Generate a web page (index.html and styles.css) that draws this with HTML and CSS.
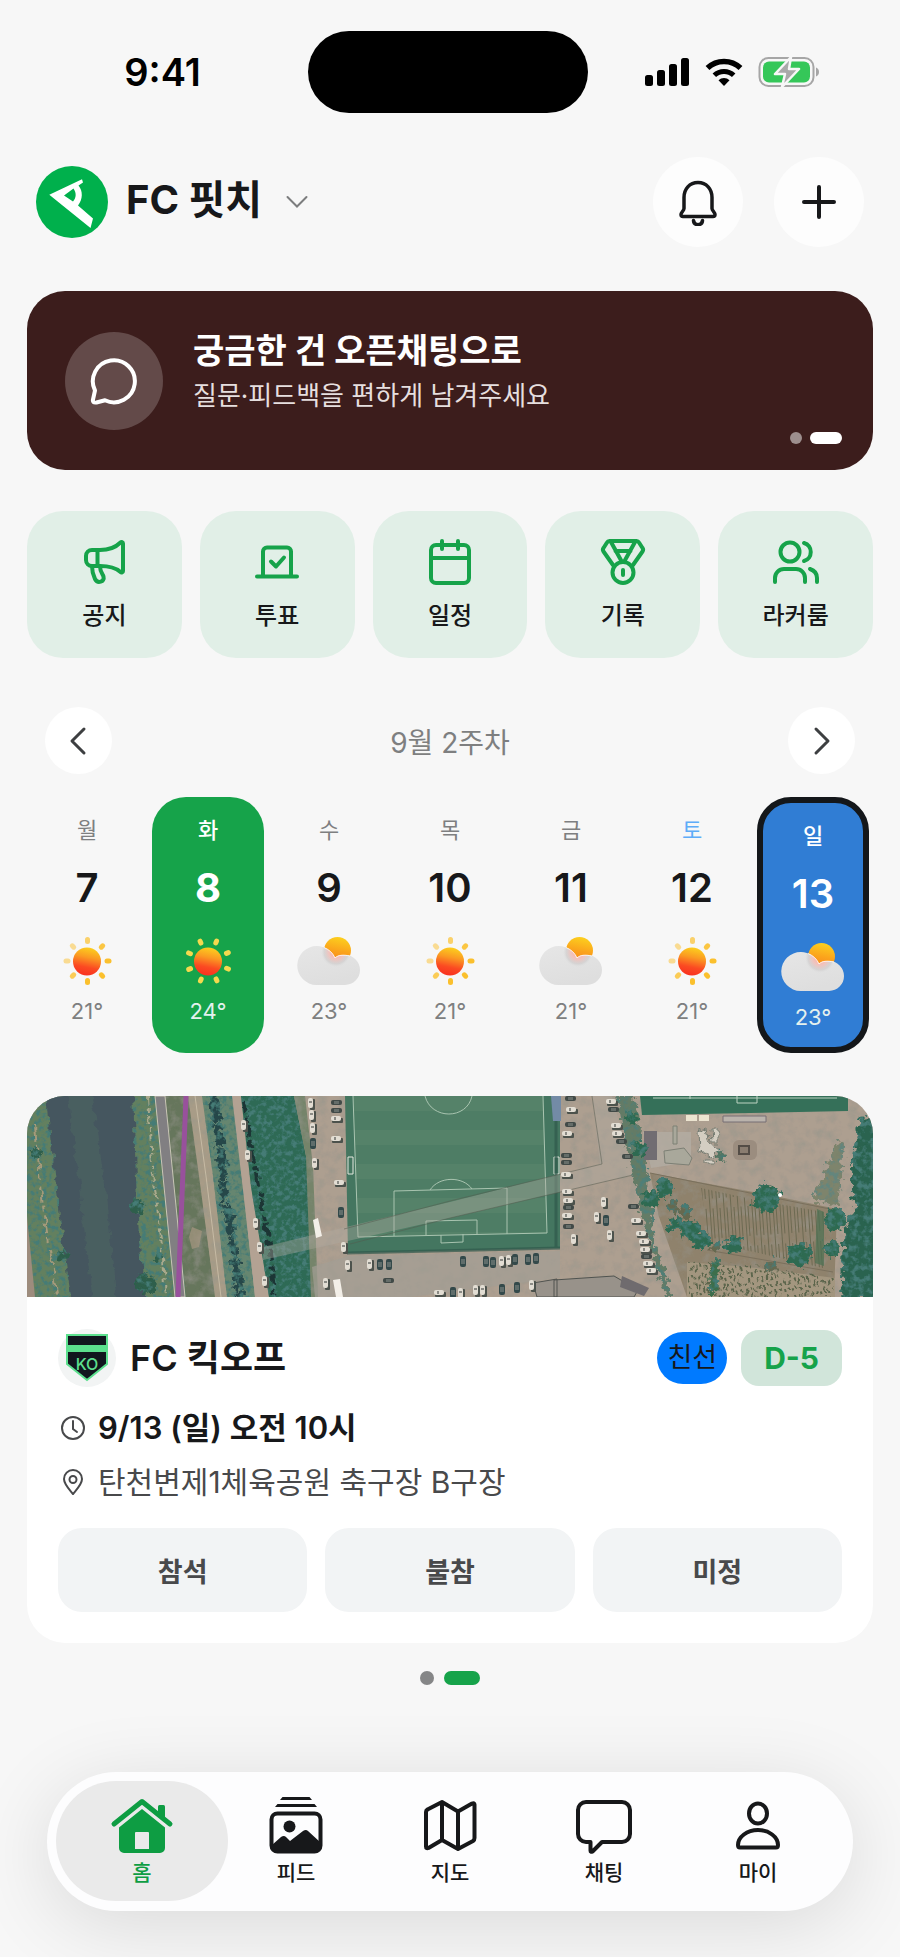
FILE: index.html
```html
<!DOCTYPE html>
<html lang="ko">
<head>
    <meta charset="UTF-8">
    <meta name="viewport" content="width=device-width, initial-scale=1.0">
    <title>FC 핏치</title>
    <link rel="stylesheet" href="styles.css">
</head>
<body>
    <!-- Shared symbols -->
    <svg class="symbols" width="0" height="0" aria-hidden="true">
        <defs>
            <linearGradient id="sunFill" x1="0.6" y1="0" x2="0.4" y2="1">
                <stop offset="0" stop-color="#fcd01e"/>
                <stop offset="0.35" stop-color="#fb9a22"/>
                <stop offset="0.7" stop-color="#fb4a22"/>
                <stop offset="1" stop-color="#f9301f"/>
            </linearGradient>
            <linearGradient id="smallSunFill" x1="0.6" y1="0" x2="0.4" y2="1">
                <stop offset="0" stop-color="#fcd01e"/>
                <stop offset="0.5" stop-color="#fba41c"/>
                <stop offset="1" stop-color="#f8801f"/>
            </linearGradient>
            <linearGradient id="cloudFill" x1="0" y1="0" x2="0.4" y2="1">
                <stop offset="0" stop-color="#e6e6e6"/>
                <stop offset="1" stop-color="#dedede"/>
            </linearGradient>
            <radialGradient id="cloudGlow">
                <stop offset="0" stop-color="#ffa79b"/>
                <stop offset="0.5" stop-color="#f3bdb6" stop-opacity="0.8"/>
                <stop offset="0.8" stop-color="#c9c6c6" stop-opacity="0.5"/>
                <stop offset="1" stop-color="#dcdcdc" stop-opacity="0"/>
            </radialGradient>
            <clipPath id="cloudClip">
                <path d="M20 9C28 9 35 14 38 21C41 18 44 18 48 18A15 15 0 0 1 48 48H19.500A19.500 19.500 0 0 1 20 9Z"/>
            </clipPath>
        </defs>
        <symbol id="sun" viewBox="0 0 52 52">
            <g fill="#fbc02d">
                <rect x="24" y="2" width="5" height="7" rx="2.500" opacity="0.7"/>
                <rect x="24" y="2" width="5" height="7" rx="2.500" opacity="0.9" transform="rotate(45 26.500 26)"/>
                <rect x="24" y="2" width="5" height="7" rx="2.500" transform="rotate(90 26.500 26)"/>
                <rect x="24" y="2" width="5" height="7" rx="2.500" transform="rotate(135 26.500 26)"/>
                <rect x="24" y="2" width="5" height="7" rx="2.500" transform="rotate(180 26.500 26)"/>
                <rect x="24" y="2" width="5" height="7" rx="2.500" opacity="0.8" transform="rotate(225 26.500 26)"/>
                <rect x="24" y="2" width="5" height="7" rx="2.500" opacity="0.5" transform="rotate(270 26.500 26)"/>
                <rect x="24" y="2" width="5" height="7" rx="2.500" opacity="0.5" transform="rotate(315 26.500 26)"/>
            </g>
            <circle cx="26" cy="26.500" r="14" fill="url(#sunFill)"/>
        </symbol>
        <symbol id="sun-turned" viewBox="0 0 52 52">
            <g fill="#f5d94e" transform="rotate(22 26.500 26)">
                <rect x="24" y="2" width="5" height="7" rx="2.500"/>
                <rect x="24" y="2" width="5" height="7" rx="2.500" transform="rotate(45 26.500 26)"/>
                <rect x="24" y="2" width="5" height="7" rx="2.500" transform="rotate(90 26.500 26)"/>
                <rect x="24" y="2" width="5" height="7" rx="2.500" transform="rotate(135 26.500 26)"/>
                <rect x="24" y="2" width="5" height="7" rx="2.500" transform="rotate(180 26.500 26)"/>
                <rect x="24" y="2" width="5" height="7" rx="2.500" transform="rotate(225 26.500 26)"/>
                <rect x="24" y="2" width="5" height="7" rx="2.500" transform="rotate(270 26.500 26)"/>
                <rect x="24" y="2" width="5" height="7" rx="2.500" transform="rotate(315 26.500 26)"/>
            </g>
            <circle cx="26" cy="26.500" r="14" fill="url(#sunFill)"/>
        </symbol>
        <symbol id="cloudy" viewBox="0 -2 64 52">
            <circle cx="40.500" cy="13.500" r="13.500" fill="url(#smallSunFill)"/>
            <path d="M20 9C28 9 35 14 38 21C41 18 44 18 48 18A15 15 0 0 1 48 48H19.500A19.500 19.500 0 0 1 20 9Z" fill="url(#cloudFill)"/>
            <circle cx="39" cy="15" r="15" fill="url(#cloudGlow)" clip-path="url(#cloudClip)"/>
            <path d="M27 10.500C32 12.500 36 16 38 21C41 18 46 17.500 53 19" fill="none" stroke="#fff" stroke-width="1" opacity="0.8"/>
        </symbol>
    </svg>

    <div class="app">
        <div class="status-bar">
            <div class="status-side"><span class="clock">9:41</span></div>
            <div class="island"></div>
            <div class="status-side status-icons">
                <svg width="45" height="30" viewBox="0 0 45 30" aria-hidden="true">
                    <rect x="0" y="18" width="8" height="11" rx="2.500"/>
                    <rect x="12" y="13" width="8" height="16" rx="2.500"/>
                    <rect x="24" y="7" width="8" height="22" rx="2.500"/>
                    <rect x="36" y="1" width="8" height="28" rx="2.500"/>
                </svg>
                <svg width="38" height="30" viewBox="0 0 38 30" aria-hidden="true">
                    <path d="M19 29L13.500 23.300a8 8 0 0 1 11 0z"/>
                    <path d="M9.300 18.300a14 14 0 0 1 19.400 0" fill="none" stroke="#000" stroke-width="5"/>
                    <path d="M2.500 11a24 24 0 0 1 33 0" fill="none" stroke="#000" stroke-width="5.500"/>
                </svg>
                <svg width="62" height="32" viewBox="0 0 62 32" aria-hidden="true">
                    <rect x="1.500" y="2" width="54" height="28" rx="9" fill="none" stroke="#a6a6a6" stroke-width="2"/>
                    <rect x="5" y="5.500" width="47" height="21" rx="6" fill="#35c759"/>
                    <path d="M58 11.500c4 1.500 4 7.500 0 9z" fill="#a6a6a6"/>
                    <path d="M33 1L17 18h10l-3 13 17-18H31z" fill="#a9a9a9" stroke="#f7f7f7" stroke-width="2.500" stroke-linejoin="round"/>
                </svg>
            </div>
        </div>

        <header class="header">
            <button class="team-switch" type="button">
                <svg class="team-logo" viewBox="0 0 72 72" aria-hidden="true">
                    <circle cx="36" cy="36" r="36" fill="#00b04c"/>
                    <path fill="#fff" fill-rule="evenodd" d="M13.300 28.700L46 13.300L47 16.500L42.500 19.500C47 25 47 33 42 39.500L57 52.500L54.500 62Z M28 29.500L37 35.500C40.500 31.500 40.500 27 37.500 22.500Z"/>
                </svg>
                <span class="team-name">FC 핏치</span>
                <svg width="22" height="14" viewBox="0 0 22 14" fill="none" stroke="#7c7d7e" stroke-width="2" stroke-linecap="round" aria-hidden="true">
                    <path d="M1.500 2l9.500 9.500L20.500 2"/>
                </svg>
            </button>
            <div class="header-actions">
                <button class="round-button" type="button" aria-label="알림">
                    <svg width="48" height="48" viewBox="0 0 48 48" fill="none" stroke="#17181a" stroke-width="3.500" stroke-linejoin="round" stroke-linecap="round" aria-hidden="true">
                        <path d="M24 4.500c-8.500 0-14 6.500-14 15v11c0 2-3 4-3 6 0 1.500.5 2 2 2h30c1.500 0 2-.5 2-2 0-2-3-4-3-6V19.500c0-8.500-5.500-15-14-15z"/>
                        <path d="M19.500 42.500c.5 5.500 8.500 5.500 9 0"/>
                    </svg>
                </button>
                <button class="round-button" type="button" aria-label="추가">
                    <svg width="48" height="48" viewBox="0 0 48 48" fill="none" stroke="#17181a" stroke-width="4" stroke-linecap="round" aria-hidden="true">
                        <path d="M24 9v30M9 24h30"/>
                    </svg>
                </button>
            </div>
        </header>

        <main>
            <a class="banner" href="#openchat">
                <span class="banner-icon">
                    <svg width="52" height="52" viewBox="0 0 52 52" fill="none" stroke="#fff" stroke-width="4" stroke-linejoin="round" aria-hidden="true">
                        <path d="M7 35.500a21 21 0 1 1 10 9.800l-8.500 2.200c-3 .5-4-.8-3.500-3z"/>
                    </svg>
                </span>
                <span class="banner-text">
                    <strong>궁금한 건 오픈채팅으로</strong>
                    <span>질문·피드백을 편하게 남겨주세요</span>
                </span>
                <span class="banner-dots"><i></i><i class="on"></i></span>
            </a>

            <nav class="quick-menu" aria-label="바로가기">
                <a href="#notice">
                    <svg viewBox="0 0 48 48" aria-hidden="true">
                        <path d="M12 12h8c9 0 16-3 20.500-7.500 1-1 2.500-.5 2.500 1V33c0 1.500-1.500 2-2.500 1C36 30 29 28 20 28h-8a6 6 0 0 1-6-6v-4a6 6 0 0 1 6-6z"/>
                        <path d="M17.500 12v16M12 28c0 5 1 9 3 13 2.500 5 10 3 8.500-2.500-.5-2-3.500-5-3.500-10"/>
                    </svg>
                    공지
                </a>
                <a href="#vote">
                    <svg viewBox="0 0 48 48" aria-hidden="true">
                        <path d="M4 38.500h40M10 38V13.500a4 4 0 0 1 4-4h20a4 4 0 0 1 4 4V38M18 23.500l5 5 8-9"/>
                    </svg>
                    투표
                </a>
                <a href="#schedule">
                    <svg viewBox="0 0 48 48" aria-hidden="true">
                        <rect x="5" y="7" width="38" height="38" rx="5"/>
                        <path d="M5 20h38M16 3v8M32 3v8"/>
                    </svg>
                    일정
                </a>
                <a href="#record">
                    <svg viewBox="0 0 48 48" aria-hidden="true">
                        <path d="M14 27L4.500 13.500a3 3 0 0 1 0-3.500L8 4.500A3 3 0 0 1 10.500 3h27A3 3 0 0 1 40 4.500l3.500 5.500a3 3 0 0 1 0 3.500L34 27"/>
                        <path d="M12 4l11 20M36 4L25 24M16.500 13h15"/>
                        <circle cx="24" cy="34.500" r="10.500"/>
                        <path d="M24 32v5"/>
                    </svg>
                    기록
                </a>
                <a href="#locker">
                    <svg viewBox="0 0 48 48" aria-hidden="true">
                        <circle cx="18" cy="14" r="9.500"/>
                        <path d="M3 44v-4c0-5 4-9 9-9h12c5 0 9 4 9 9v4M32 5c9 2.500 9 15.500 0 18M38 31c4.500 1.500 7 4.500 7 9v4"/>
                    </svg>
                    라커룸
                </a>
            </nav>

            <section class="week" aria-label="주간 일정">
                <div class="week-nav">
                    <button type="button" aria-label="이전 주">
                        <svg width="32" height="32" viewBox="0 0 32 32" aria-hidden="true"><path d="M21 4L9 16l12 12"/></svg>
                    </button>
                    <h2>9월 2주차</h2>
                    <button type="button" aria-label="다음 주">
                        <svg width="32" height="32" viewBox="0 0 32 32" aria-hidden="true"><path d="M11 4l12 12-12 12"/></svg>
                    </button>
                </div>
                <div class="days">
                    <button class="day" type="button">
                        <span class="day-name">월</span>
                        <span class="day-number">7</span>
                        <svg class="weather" aria-hidden="true"><use href="#sun"/></svg>
                        <span class="temp">21°</span>
                    </button>
                    <button class="day today" type="button">
                        <span class="day-name">화</span>
                        <span class="day-number">8</span>
                        <svg class="weather" aria-hidden="true"><use href="#sun-turned"/></svg>
                        <span class="temp">24°</span>
                    </button>
                    <button class="day" type="button">
                        <span class="day-name">수</span>
                        <span class="day-number">9</span>
                        <svg class="weather" aria-hidden="true"><use href="#cloudy"/></svg>
                        <span class="temp">23°</span>
                    </button>
                    <button class="day" type="button">
                        <span class="day-name">목</span>
                        <span class="day-number">10</span>
                        <svg class="weather" aria-hidden="true"><use href="#sun"/></svg>
                        <span class="temp">21°</span>
                    </button>
                    <button class="day" type="button">
                        <span class="day-name">금</span>
                        <span class="day-number">11</span>
                        <svg class="weather" aria-hidden="true"><use href="#cloudy"/></svg>
                        <span class="temp">21°</span>
                    </button>
                    <button class="day saturday" type="button">
                        <span class="day-name">토</span>
                        <span class="day-number">12</span>
                        <svg class="weather" aria-hidden="true"><use href="#sun"/></svg>
                        <span class="temp">21°</span>
                    </button>
                    <button class="day selected" type="button">
                        <span class="day-name">일</span>
                        <span class="day-number">13</span>
                        <svg class="weather" aria-hidden="true"><use href="#cloudy"/></svg>
                        <span class="temp">23°</span>
                    </button>
                </div>
            </section>

            <article class="match-card">
                <svg class="map-photo" viewBox="0 0 846 201" preserveAspectRatio="xMidYMid slice" role="img" aria-label="축구장 위성 사진">
                    <defs>
                        <filter id="leaves" x="0" y="0" width="100%" height="100%">
                            <feTurbulence type="fractalNoise" baseFrequency="0.2" numOctaves="3" seed="4" result="n"/>
                            <feColorMatrix in="n" values="0 0 0 0 0.06  0 0 0 0 0.2  0 0 0 0 0.18  0 4 0 0 -1.800"/>
                            <feComposite in2="SourceAlpha" operator="in" result="shade"/>
                            <feMerge><feMergeNode in="SourceGraphic"/><feMergeNode in="shade"/></feMerge>
                        </filter>
                        <filter id="grit" x="0" y="0" width="100%" height="100%">
                            <feTurbulence type="fractalNoise" baseFrequency="0.09" numOctaves="4" seed="9" result="n"/>
                            <feColorMatrix in="n" values="0 0 0 0 0.3  0 0 0 0 0.3  0 0 0 0 0.26  0 1.400 0 0 -0.600"/>
                            <feComposite in2="SourceAlpha" operator="in" result="shade"/>
                            <feMerge><feMergeNode in="SourceGraphic"/><feMergeNode in="shade"/></feMerge>
                        </filter>
                        <filter id="rough" x="-10%" y="-10%" width="120%" height="120%">
                            <feTurbulence type="fractalNoise" baseFrequency="0.12" numOctaves="2" seed="2" result="n"/>
                            <feDisplacementMap in="SourceGraphic" in2="n" scale="9" xChannelSelector="R" yChannelSelector="G"/>
                        </filter>
                        <filter id="crown" x="-20%" y="-20%" width="140%" height="140%">
                            <feTurbulence type="fractalNoise" baseFrequency="0.16" numOctaves="3" seed="7" result="n"/>
                            <feDisplacementMap in="SourceGraphic" in2="n" scale="14" xChannelSelector="R" yChannelSelector="G" result="shape"/>
                            <feColorMatrix in="n" values="0 0 0 0 0.06  0 0 0 0 0.2  0 0 0 0 0.18  0 4 0 0 -1.800" result="dark"/>
                            <feComposite in="dark" in2="shape" operator="in" result="shade"/>
                            <feMerge><feMergeNode in="shape"/><feMergeNode in="shade"/></feMerge>
                        </filter>
                        <pattern id="mowing" width="20" height="34" patternUnits="userSpaceOnUse">
                            <rect width="20" height="34" fill="#4e7d65"/>
                            <rect width="20" height="15" fill="#558269"/>
                        </pattern>
                        <pattern id="rows" width="7" height="40" patternUnits="userSpaceOnUse" patternTransform="rotate(-4)">
                            <path d="M1.500 0v40M4.500 0v30" stroke="#6d6a52" stroke-width="1"/>
                        </pattern>
                        <pattern id="shrubs" width="9" height="8" patternUnits="userSpaceOnUse" patternTransform="rotate(-12)">
                            <path d="M2 1v4M6 3v4" stroke="#5c654c" stroke-width="2"/>
                        </pattern>
                        <g id="car"><rect x="1" y="2" width="11" height="5" rx="1" fill="#4c524c"/><rect width="10" height="5" rx="2" fill="#e2ddd3"/><rect x="3" y="1" width="2" height="3" fill="#8a8a84"/></g>
                        <g id="car-dark"><rect width="11" height="5" rx="2" fill="#414a47"/><rect x="3" y="1" width="5" height="3" fill="#656d69"/></g>
                        <g id="car-v"><rect x="2" y="1" width="5" height="11" rx="1" fill="#4c524c"/><rect width="5" height="10" rx="2" fill="#e2ddd3"/><rect x="1" y="3" width="3" height="2" fill="#8a8a84"/></g>
                        <g id="car-vd"><rect width="6" height="11" rx="2" fill="#33494a"/><rect x="1" y="3" width="4" height="5" fill="#5f6d6b"/></g>
                    </defs>

                    <!-- Ground -->
                    <rect width="846" height="201" fill="#ad9f90" filter="url(#grit)"/>

                    <!-- River and banks -->
                    <path d="M0 0H150L190 201H0z" fill="#64805f" filter="url(#leaves)"/>
                    <path d="M0 120L8 201H0z" fill="#9d8c7d"/>
                    <g filter="url(#rough)">
                        <path d="M8 30l8 80 16 101" fill="none" stroke="#a59a7a" stroke-width="2" stroke-dasharray="14 5 5 7"/>
                        <path d="M20 -6L23 40L29 84L35 140L45 208H121L112 144L109 84L106 -6z" fill="#44575f"/>
                        <path d="M40 -6L52 90L66 208H90L78 90L64 -6z" fill="#4b6163" opacity="0.7"/>
                        <path d="M121 0l4 70 10 80 4 51" fill="none" stroke="#a9a98c" stroke-width="2" stroke-dasharray="9 3 4 3"/>
                    </g>
                    <g fill="#2f5f4b" filter="url(#crown)">
                        <circle cx="35" cy="160" r="6"/><circle cx="111" cy="110" r="7"/><circle cx="118" cy="187" r="10"/><circle cx="9" cy="57" r="5"/><circle cx="130" cy="162" r="4"/>
                    </g>

                    <!-- Riverside roads -->
                    <path d="M138 0H163L188 201H159z" fill="#66765c" filter="url(#grit)"/>
                    <path d="M165 131l10 4-3 16-7 2-3-12z" fill="#a69781" opacity="0.7"/>
                    <path d="M128 0h10l10 100 10 101h-10z" fill="#817f82" stroke="#c9c5b5" stroke-width="1"/>
                    <path d="M161 0h14l10 70 15 131h-12L172 80z" fill="#a89c87" filter="url(#grit)"/>
                    <path d="M168 0l11 80 15 121" fill="none" stroke="#c6baa4" stroke-width="1"/>
                    <path d="M159 0l-4 100-4 101" fill="none" stroke="#98519c" stroke-width="5"/>

                    <!-- Tree strips -->
                    <path d="M175 0H206L216 90L228 201H200L186 80z" fill="#66866f" filter="url(#leaves)"/>
                    <path d="M186 -4l7 50 4 50 9 50 8 60" fill="none" stroke="#28474a" stroke-width="8" stroke-dasharray="30 2 22 2" filter="url(#crown)"/>
                    <path d="M205 0h9l8 80 20 121h-14l-10-90z" fill="#b3a293"/>
                    <path d="M214 0h53l14 70 3 60 4 71h-46l-18-110z" fill="#2d6a54" filter="url(#leaves)"/>
                    <path d="M267 0l12 60 5 141h7l-5-130-8-71z" fill="#75846a" filter="url(#grit)"/>
                    <path d="M217 5l6 40 10 50 10 60 5 50" fill="none" stroke="#1c3634" stroke-width="4" stroke-dasharray="12 4 6 3" filter="url(#rough)"/>

                    <!-- Main pitch -->
                    <path d="M318 0H533V152L321 157z" fill="#447660"/>
                    <path d="M326 0H516L520 137L331 141z" fill="url(#mowing)"/>
                    <g fill="none" stroke="#a9c4b0" stroke-width="1">
                        <path d="M326 0l5 141 189-4-4-137M367 140V95l113-3v46M399 139v-14l51-1v14M414 139v8l22-1v-8"/>
                        <path d="M403 94c9-14 33-14 42-1M398 0c6 24 42 24 47 0"/>
                        <path d="M321 61h5v17h-5zM527 61h5v17h-5z" stroke="#e5e9df"/>
                    </g>
                    <path d="M524 0h10v25h-8z" fill="#738ba6"/>
                    <path d="M320 157l213-5M529 25v127" fill="none" stroke="#2f594b" stroke-width="3" opacity="0.7"/>

                    <!-- Car park lanes -->
                    <path d="M565 0h20l18 66 3 13-183 43-187 42v-13l187-45 150-38z" fill="#b0aaa0" opacity="0.4"/>
                    <path d="M565 0l10 68-152 37-106 28M606 79l-183 43-100 26" fill="none" stroke="#54594e" stroke-width="1" opacity="0.5"/>
                    <path d="M321 160l212-5v27l-150 19H288l-3-30z" fill="#a39e94" opacity="0.7"/>

                    <!-- Second pitch -->
                    <path d="M613 0h208v15l-206 4z" fill="#357059"/>
                    <path d="M626 2h184M663 0v3M710 0v7h20v-7" fill="none" stroke="#bdd3c2" stroke-width="1"/>
                    <path d="M590 0h18l4 22 6 35 10 90 18 54h-8l-20-70-16-65z" fill="#5d7862" filter="url(#crown)" opacity="0.9"/>

                    <!-- Site and sheds -->
                    <path d="M616 36h48v30l-40 6z" fill="#b3aca2" opacity="0.8"/>
                    <rect x="617" y="35" width="13" height="29" fill="#716d72"/>
                    <rect x="659" y="19" width="11" height="6" fill="#ece4d0"/><rect x="672" y="19" width="10" height="6" fill="#ece4d0"/>
                    <path d="M696 20h43v6h-43z" fill="#bab3ac" stroke="#776f74" stroke-width="1"/>
                    <path d="M637 55l20-3 8 10-3 7-24-2zM646 30v18h4V30z" fill="#a9a89b" stroke="#7d8075" stroke-width="1"/>
                    <path d="M671 35l9-3 3 16 8 6-5 7-14-6zM684 34h7v14h-6zM677 64h9v4h-9z" fill="#d4cec2" stroke="#767c72" stroke-width="1" filter="url(#rough)"/>
                    <circle cx="694" cy="60" r="5" fill="#547562" filter="url(#crown)"/>
                    <rect x="706" y="44" width="24" height="20" rx="6" fill="#9b8d7f"/><rect x="712" y="50" width="10" height="8" fill="#8a7d70" stroke="#544d46" stroke-width="2"/>
                    <path d="M785 103l12-26 14-34 6 8-6 58z" fill="#6a7a5d" filter="url(#crown)" opacity="0.7"/>

                    <!-- Fields -->
                    <path d="M623 77l120 22 67 14-3 88H660l-28-80z" fill="#8f826c" filter="url(#grit)"/>
                    <path d="M674 92l55 12 68 12-1 56-60-14-54-12z" fill="url(#rows)"/>
                    <path d="M790 113l7 3v54l-9-3z" fill="#4c7152" opacity="0.7"/>
                    <path d="M660 166l70 6 78 10v19H660z" fill="#a3967f"/>
                    <path d="M662 166l70 4 74 12v19H660z" fill="url(#shrubs)" filter="url(#rough)"/>
                    <path d="M685 162l7 2-4 33h-6z" fill="#3c6e4c" filter="url(#crown)"/>
                    <path d="M623 77l180 36M680 154l126 22" fill="none" stroke="#7a705d" stroke-width="1"/>

                    <!-- Trees -->
                    <path d="M832 22l30-2v183h-48l4-72 10-18-4-36z" fill="#296350" filter="url(#crown)"/>
                    <g fill="#2f6b51" filter="url(#crown)">
                        <circle cx="740" cy="102" r="14"/><circle cx="772" cy="159" r="12"/><circle cx="707" cy="148" r="9"/>
                        <circle cx="808" cy="123" r="11"/><circle cx="805" cy="152" r="8"/><circle cx="663" cy="134" r="10"/><circle cx="674" cy="145" r="9"/>
                        <circle cx="648" cy="128" r="7"/><circle cx="638" cy="92" r="9"/><circle cx="624" cy="102" r="8"/><circle cx="613" cy="52" r="7"/><circle cx="605" cy="22" r="6"/>
                    </g>
                    <circle cx="753" cy="99" r="2" fill="#fff"/>
                    <g fill="#66694f" filter="url(#crown)">
                        <circle cx="647" cy="111" r="7"/><circle cx="659" cy="116" r="6"/><circle cx="689" cy="151" r="5"/><circle cx="744" cy="171" r="6"/>
                    </g>

                    <!-- Buildings -->
                    <path d="M506 187l24-4v18h-20zM527 184l60-4 24 14-4 7h-80z" fill="#98928a" stroke="#50534f" stroke-width="1"/>
                    <path d="M595 180l27 12-5 8-24-9z" fill="#6f6b6e"/>

                    <!-- Parked cars -->
                    <use href="#car-dark" x="304" y="4"/><use href="#car-dark" x="304" y="12"/><use href="#car" x="304" y="20"/><use href="#car" x="304" y="40"/><use href="#car" x="307" y="84"/>
                    <use href="#car-v" x="281" y="2"/><use href="#car-v" x="282" y="14"/><use href="#car-v" x="283" y="27"/><use href="#car-vd" x="283" y="42"/><use href="#car-v" x="285" y="62"/>
                    <path d="M286 124l5-2 4 18-6 2zM306 184l7-1 3 18h-7z" fill="#f3efe8"/>
                    <use href="#car-vd" x="311" y="111"/><use href="#car-v" x="314" y="146"/><use href="#car-v" x="318" y="164"/><use href="#car-v" x="296" y="182"/>
                    <use href="#car-v" x="340" y="163"/><use href="#car-vd" x="350" y="163"/><use href="#car-vd" x="359" y="163"/><use href="#car-dark" x="356" y="182"/><use href="#car" x="407" y="194"/>
                    <use href="#car-v" x="218" y="54"/><use href="#car-v" x="214" y="24"/><use href="#car-v" x="226" y="122"/><use href="#car-v" x="230" y="146"/><use href="#car-v" x="235" y="180"/>
                    <use href="#car-vd" x="433" y="160"/><use href="#car-vd" x="456" y="160"/><use href="#car-vd" x="463" y="161"/><use href="#car-v" x="472" y="160"/><use href="#car-v" x="479" y="159"/><use href="#car-vd" x="485" y="158"/><use href="#car-vd" x="498" y="158"/><use href="#car-vd" x="506" y="157"/>
                    <use href="#car-vd" x="423" y="191"/><use href="#car-v" x="431" y="192"/><use href="#car-v" x="446" y="189"/><use href="#car-v" x="453" y="189"/><use href="#car-vd" x="472" y="188"/><use href="#car-vd" x="487" y="186"/><use href="#car-v" x="502" y="184"/>
                    <use href="#car-dark" x="538" y="0"/><use href="#car" x="539" y="11"/><use href="#car-dark" x="538" y="26"/><use href="#car" x="535" y="35"/><use href="#car-dark" x="534" y="57"/><use href="#car-dark" x="534" y="64"/><use href="#car" x="534" y="76"/>
                    <use href="#car" x="535" y="93"/><use href="#car" x="536" y="102"/><use href="#car-dark" x="536" y="109"/><use href="#car" x="535" y="117"/><use href="#car-dark" x="536" y="128"/><use href="#car-v" x="544" y="138"/>
                    <use href="#car-v" x="574" y="101"/><use href="#car-v" x="567" y="116"/><use href="#car-vd" x="576" y="119"/><use href="#car-v" x="580" y="134"/>
                    <use href="#car" x="579" y="3"/><use href="#car-dark" x="581" y="11"/><use href="#car" x="584" y="27"/><use href="#car" x="585" y="35"/><use href="#car-dark" x="589" y="43"/><use href="#car-dark" x="595" y="58"/>
                    <use href="#car-dark" x="601" y="108"/><use href="#car" x="604" y="122"/><use href="#car" x="609" y="135"/><use href="#car" x="612" y="143"/><use href="#car" x="613" y="151"/><use href="#car-dark" x="614" y="158"/><use href="#car" x="616" y="165"/><use href="#car" x="619" y="172"/>
                </svg>

                <div class="match-body">
                    <div class="match-title">
                        <svg class="opponent-logo" viewBox="0 0 58 58" aria-hidden="true">
                            <circle cx="29" cy="29" r="29" fill="#f2f4f4"/>
                            <path d="M9 6h40v29L29 51 9 35z" fill="#11161e" stroke="#5ce08e" stroke-width="2"/>
                            <path d="M8 5h42v2H8zM10 16h38v7H10z" fill="#5ce08e"/>
                            <text x="29" y="41" text-anchor="middle" font-size="16" font-weight="500" fill="#5ce08e">KO</text>
                        </svg>
                        <h3>FC 킥오프</h3>
                        <span class="tag-friendly">친선</span>
                        <span class="tag-dday">D-5</span>
                    </div>
                    <p class="match-info match-time">
                        <svg width="26" height="26" viewBox="0 0 26 26" aria-hidden="true"><circle cx="13" cy="13" r="11"/><path d="M13 6v8l4 3"/></svg>
                        9/13 (일) 오전 10시
                    </p>
                    <p class="match-info">
                        <svg width="26" height="26" viewBox="0 0 26 26" aria-hidden="true"><path d="M13 25C8 19 4 15 4 10a9 9 0 0 1 18 0c0 5-4 9-9 15z"/><circle cx="13" cy="10.500" r="3.500"/></svg>
                        탄천변제1체육공원 축구장 B구장
                    </p>
                    <div class="answers">
                        <button type="button">참석</button>
                        <button type="button">불참</button>
                        <button type="button">미정</button>
                    </div>
                </div>
            </article>

            <div class="card-dots"><i></i><i class="on"></i></div>
        </main>

        <nav class="tab-bar" aria-label="메뉴">
            <a class="active" href="#home">
                <svg viewBox="0 0 64 58" aria-hidden="true">
                    <path d="M4 27L32 4.500L60 27" fill="none" stroke="#0e9d43" stroke-width="5" stroke-linecap="round" stroke-linejoin="round"/>
                    <path d="M48 17V9.500a1.500 1.500 0 0 1 1.500-1.500h4A1.500 1.500 0 0 1 55 9.500V22z" fill="#0e9d43"/>
                    <path fill="#0e9d43" fill-rule="evenodd" d="M32 12L55 30.500V51a5 5 0 0 1-5 5H14a5 5 0 0 1-5-5V30.500zM26 35a1 1 0 0 0-1 1v16h14V36a1 1 0 0 0-1-1z"/>
                </svg>
                홈
            </a>
            <a href="#feed">
                <svg viewBox="0 0 64 58" fill="#17181a" aria-hidden="true">
                    <path d="M18.500 0h27l2.500 3H16zM13.500 7h37l2.500 3H11z"/>
                    <rect x="7.500" y="16.500" width="49" height="38" rx="6" fill="none" stroke="#17181a" stroke-width="4"/>
                    <circle cx="25.500" cy="29.500" r="6"/>
                    <path d="M8 48l9-8q3-2 5 0l4 4 13-10q3-2 5 0l12 11v6a4 4 0 0 1-4 4H12a4 4 0 0 1-4-4z"/>
                </svg>
                피드
            </a>
            <a href="#map">
                <svg class="line" viewBox="0 0 64 58" aria-hidden="true">
                    <path d="M8 15q0-1.500 1.500-2.500L24 5l16 9.500L54 6.500q2.500-1 2.500 1V41q0 2-1.500 3l-15 8-16-9-13.500 8Q8 52 8 49.500zM24 5v38M40 14.500V52"/>
                </svg>
                지도
            </a>
            <a href="#chat">
                <svg class="line" viewBox="0 0 64 58" aria-hidden="true">
                    <path d="M14 5h36a8 8 0 0 1 8 8v24a8 8 0 0 1-8 8H30l-9.500 9.500q-2 1-2-1V45H14a8 8 0 0 1-8-8V13a8 8 0 0 1 8-8z"/>
                </svg>
                채팅
            </a>
            <a href="#my">
                <svg class="line" viewBox="0 0 64 58" aria-hidden="true">
                    <ellipse cx="32" cy="16.500" rx="9" ry="10"/>
                    <path d="M12 48c0-8 9-15 20-15s20 7 20 15q0 2.500-2 2.500H14q-2 0-2-2.500z"/>
                </svg>
                마이
            </a>
        </nav>
    </div>
</body>
</html>
```

FILE: styles.css
```css
* {
    box-sizing: border-box;
}
body {
    margin: 0;
    background-color: #f7f7f7;
    color: #17181a;
    font-family: Inter, "Noto Sans CJK KR", sans-serif;
}
button {
    padding: 0;
    border: none;
    background: none;
    color: inherit;
    font: inherit;
    cursor: pointer;
}
a {
    color: inherit;
    text-decoration: none;
}
h2, h3, p {
    margin: 0;
}
svg {
    display: block;
    flex-shrink: 0;
}
.symbols {
    position: absolute;
}
.app {
    padding: 31px 27px 47px;
    overflow: hidden;
}

/* Status bar */
.status-bar {
    display: flex;
    align-items: center;
}
.status-side {
    flex: 1;
    text-align: center;
}
.clock {
    margin-right: 10px;
    font-size: 38px;
    font-weight: 600;
    color: #000;
}
.island {
    width: 280px;
    height: 82px;
    border-radius: 41px;
    background-color: #000;
}
.status-icons {
    display: flex;
    justify-content: center;
    align-items: center;
    gap: 15px;
    padding-left: 4px;
}

/* Header */
.header {
    display: flex;
    justify-content: space-between;
    align-items: center;
    margin: 44px 9px;
}
.team-switch {
    display: flex;
    align-items: center;
    gap: 18px;
}
.team-logo {
    width: 72px;
    height: 72px;
}
.team-name {
    margin-right: 6px;
    padding-bottom: 4px;
    font-size: 40px;
    font-weight: 700;
    line-height: 50px;
}
.header-actions {
    display: flex;
    gap: 31px;
}
.round-button {
    display: flex;
    justify-content: center;
    align-items: center;
    width: 90px;
    height: 90px;
    border-radius: 50%;
    background-color: #fdfdfd;
}

/* Banner */
.banner {
    position: relative;
    display: flex;
    align-items: center;
    gap: 30px;
    min-height: 179px;
    padding: 0 38px;
    border-radius: 38px;
    background-color: #3c1d1c;
    color: #fff;
}
.banner-icon {
    display: flex;
    justify-content: center;
    align-items: center;
    width: 98px;
    height: 98px;
    border-radius: 50%;
    background-color: #634a49;
}
.banner-text {
    display: flex;
    flex-direction: column;
    padding-bottom: 20px;
    font-size: 26px;
    line-height: 40px;
    color: #e6dfdf;
}
.banner-text strong {
    font-size: 34px;
    line-height: 50px;
    color: #fff;
}
.banner-dots {
    position: absolute;
    right: 31px;
    bottom: 26px;
    display: flex;
    gap: 8px;
}
.banner-dots i {
    width: 12px;
    height: 12px;
    border-radius: 6px;
    background-color: #9d8e8d;
}
.banner-dots .on {
    width: 32px;
    background-color: #fff;
}

/* Quick menu */
.quick-menu {
    display: grid;
    grid-template-columns: repeat(5, 1fr);
    gap: 18px;
    margin-top: 41px;
}
.quick-menu a {
    display: flex;
    flex-direction: column;
    align-items: center;
    gap: 12px;
    padding: 27px 0 24px;
    border-radius: 36px;
    background-color: #e1efe7;
    font-size: 24px;
    font-weight: 500;
    line-height: 36px;
}
.quick-menu svg {
    width: 48px;
    height: 48px;
    fill: none;
    stroke: #16a34a;
    stroke-width: 4;
    stroke-linecap: round;
    stroke-linejoin: round;
}

/* Week */
.week-nav {
    display: flex;
    justify-content: space-between;
    align-items: center;
    margin: 49px 18px 23px;
}
.week-nav button {
    display: flex;
    justify-content: center;
    align-items: center;
    width: 67px;
    height: 67px;
    border-radius: 50%;
    background-color: #fff;
}
.week-nav svg {
    fill: none;
    stroke: #3d3f41;
    stroke-width: 3;
    stroke-linecap: round;
    stroke-linejoin: round;
}
.week-nav h2 {
    font-size: 28px;
    font-weight: 400;
    color: #7e7f80;
}
.days {
    display: grid;
    grid-template-columns: repeat(7, 1fr);
    gap: 9px;
    margin: 0 4px;
}
.day {
    display: flex;
    flex-direction: column;
    align-items: center;
    min-height: 256px;
    padding-top: 17px;
    border-radius: 34px;
}
.day-name {
    font-size: 22px;
    line-height: 32px;
    color: #7e7f80;
}
.day-number {
    margin-top: 18px;
    font-size: 40px;
    font-weight: 600;
    line-height: 48px;
}
.weather {
    width: 64px;
    height: 52px;
    margin-top: 23px;
}
.temp {
    margin-top: 10px;
    font-size: 22px;
    line-height: 28px;
    color: #7e7f80;
}
.saturday .day-name {
    color: #5eacf8;
}
.today {
    background-color: #16a34a;
    color: #fff;
}
.today .day-number {
    font-weight: 700;
}
.selected {
    border: 6px solid #14171a;
    background-color: #307dd4;
    color: #fff;
}
.today .day-name, .selected .day-name {
    font-weight: 500;
    color: #fff;
}
.today .temp, .selected .temp {
    color: #e4f1ee;
}

/* Match card */
.match-card {
    margin-top: 43px;
    border-radius: 38px;
    background-color: #fff;
    overflow: hidden;
}
.map-photo {
    width: 100%;
    height: 201px;
}
.match-body {
    padding: 32px 31px 31px;
}
.match-title {
    display: flex;
    align-items: center;
    gap: 14px;
    margin-bottom: 14px;
}
.opponent-logo {
    width: 58px;
    height: 58px;
}
.match-title h3 {
    flex: 1;
    font-size: 36px;
    font-weight: 600;
    line-height: 50px;
}
.tag-friendly {
    padding: 0 10px;
    border-radius: 26px;
    background-color: #007aff;
    font-size: 27px;
    line-height: 52px;
}
.tag-dday {
    padding: 0 23px;
    border-radius: 18px;
    background-color: #d1e5da;
    color: #16a34a;
    font-size: 30px;
    font-weight: 700;
    line-height: 56px;
}
.match-info {
    display: flex;
    align-items: center;
    gap: 12px;
    padding-left: 2px;
    font-size: 30px;
    line-height: 54px;
    color: #48494b;
}
.match-info svg {
    fill: none;
    stroke: #48494b;
    stroke-width: 2;
    stroke-linecap: round;
}
.match-time {
    font-size: 31px;
    font-weight: 600;
    color: #17181a;
}
.answers {
    display: grid;
    grid-template-columns: repeat(3, 1fr);
    gap: 18px;
    margin-top: 19px;
}
.answers button {
    height: 84px;
    border-radius: 24px;
    background-color: #f2f4f5;
    color: #48494b;
    font-size: 27px;
    font-weight: 600;
}
.card-dots {
    display: flex;
    justify-content: center;
    gap: 10px;
    margin-top: 28px;
}
.card-dots i {
    width: 14px;
    height: 14px;
    border-radius: 7px;
    background-color: #858687;
}
.card-dots .on {
    width: 36px;
    background-color: #16a34a;
}

/* Tab bar */
.tab-bar {
    display: grid;
    grid-template-columns: repeat(5, 1fr);
    margin: 87px 20px 0;
    padding: 9px 18px 10px;
    border-radius: 70px;
    background-color: #fdfdfe;
    box-shadow: 0 14px 80px rgba(0, 0, 0, 0.12);
}
.tab-bar a {
    display: flex;
    flex-direction: column;
    align-items: center;
    gap: 4px;
    padding: 16px 0 14px;
    font-size: 21px;
    font-weight: 500;
    line-height: 28px;
}
.tab-bar svg {
    width: 64px;
    height: 58px;
}
.tab-bar .line {
    fill: none;
    stroke: #17181a;
    stroke-width: 4;
    stroke-linejoin: round;
}
.tab-bar .active {
    margin: 0 -9px;
    border-radius: 60px;
    background-color: #eaeaea;
    color: #0e9d43;
}
```
